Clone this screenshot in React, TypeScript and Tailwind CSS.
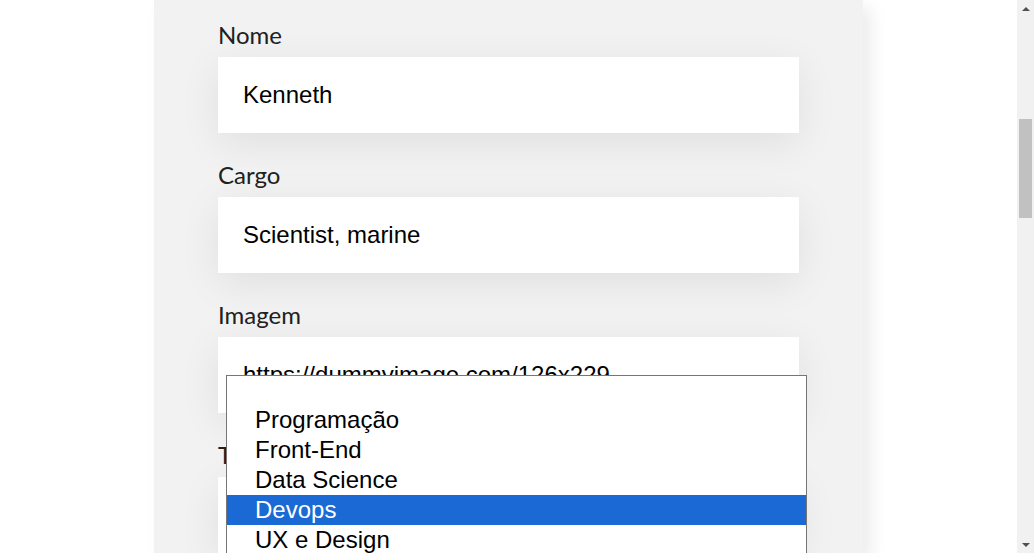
import React from "react";

const fields = [
  { label: "Nome", value: "Kenneth" },
  { label: "Cargo", value: "Scientist, marine" },
  { label: "Imagem", value: "https://dummyimage.com/126x229" },
  { label: "Time", value: "" },
];

const options = ["", "Programação", "Front-End", "Data Science", "Devops", "UX e Design"];

export default function App() {
  return (
    <div className="relative flex h-[553px] w-[1034px] overflow-hidden bg-white">
      <main className="flex flex-1 justify-center">
        <form className="flex w-[709px] flex-col gap-[27px] bg-[#f2f2f2] pl-16 pr-[64px] pt-5 shadow-[8px_8px_16px_rgba(0,0,0,0.08)]">
          {fields.map((f) => (
            <div key={f.label} className="flex flex-col">
              <label className="mb-2 font-['Lato',sans-serif] text-[24px] leading-[29px] text-[#212121]">
                {f.label}
              </label>
              <div className="flex h-[76px] items-center bg-white pl-[25px] pr-6 font-['Liberation_Sans',Arial,sans-serif] text-[24px] text-black shadow-[0_10px_40px_rgba(0,0,0,0.08)]">
                {f.value}
              </div>
            </div>
          ))}
        </form>
      </main>

      <div className="flex w-[17px] flex-col items-center bg-[#f1f1f1]">
        <div className="flex h-[17px] w-full items-center justify-center">
          <div className="h-0 w-0 border-x-[4px] border-b-[4px] border-x-transparent border-b-[#505050]" />
        </div>
        <div className="mt-[102px] h-[99px] w-[13px] bg-[#c1c1c1]" />
        <div className="flex-1" />
        <div className="flex h-[17px] w-full items-center justify-center">
          <div className="h-0 w-0 border-x-[4px] border-t-[4px] border-x-transparent border-t-[#505050]" />
        </div>
      </div>

      <ul className="absolute left-[226px] top-[375px] w-[581px] border border-[#767676] bg-white font-['Liberation_Sans',Arial,sans-serif] text-[24px] text-black">
        {options.map((o, i) => (
          <li
            key={i}
            className={
              (i === 0 ? "h-[29px] " : "h-[30px] ") +
              "flex items-center pl-[28px] " +
              (o === "Devops" ? "bg-[#1a69d4] text-white" : "")
            }
          >
            {o}
          </li>
        ))}
      </ul>
    </div>
  );
}
